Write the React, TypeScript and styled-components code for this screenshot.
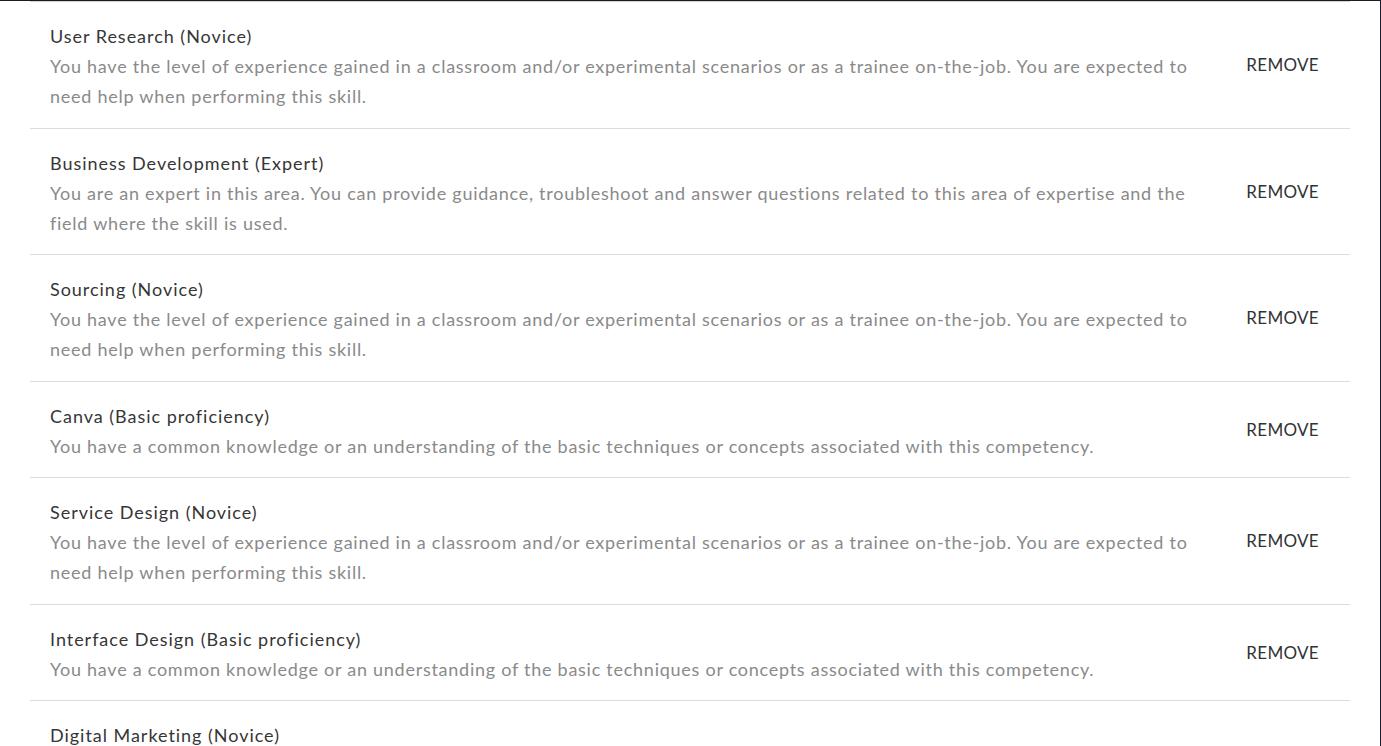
import styled, { createGlobalStyle } from 'styled-components';

const GlobalStyle = createGlobalStyle`
  * {
    box-sizing: border-box;
  }

  html, body {
    margin: 0;
    padding: 0;
    height: 100%;
    overflow: hidden;
    background: #fff;
  }

  body {
    font-family: Lato, "Open Sans", Arial, sans-serif;
  }
`

const Frame = styled.main`
  width: 100%;
  height: 100vh;
  overflow: hidden;
  border-top: 1px solid #1c1c1c;
  border-right: 1px solid #161d33;
`

const SkillList = styled.ul`
  list-style: none;
  margin: 0 30px;
  padding: 0;
  border-top: 1px solid #d4d4d4;
`

const SkillRow = styled.li`
  display: flex;
  align-items: center;
  gap: 40px;
  padding: 19px 0 16.5px 20px;
  border-bottom: 1px solid #dcdcdc;
`

const SkillText = styled.div`
  flex: 1;
  min-width: 0;
  line-height: 30px;
  font-size: 18px;
`

const SkillTitle = styled.div`
  color: #363636;
  letter-spacing: 0.97px;
`

const SkillDescription = styled.div`
  color: #8a8a8a;
  letter-spacing: 0.74px;
`

const RemoveButton = styled.button`
  flex-shrink: 0;
  padding: 0 31px 2px 0;
  border: none;
  background: none;
  font-family: Lato, "Open Sans", Arial, sans-serif;
  font-size: 17px;
  line-height: 30px;
  letter-spacing: 0.3px;
  color: #333;
  cursor: pointer;
`

const NOVICE = 'You have the level of experience gained in a classroom and/or experimental scenarios or as a trainee on-the-job. You are expected to need help when performing this skill.'
const BASIC = 'You have a common knowledge or an understanding of the basic techniques or concepts associated with this competency.'
const EXPERT = 'You are an expert in this area. You can provide guidance, troubleshoot and answer questions related to this area of expertise and the field where the skill is used.'

const skills = [
  { name: 'User Research', level: 'Novice', text: NOVICE },
  { name: 'Business Development', level: 'Expert', text: EXPERT },
  { name: 'Sourcing', level: 'Novice', text: NOVICE },
  { name: 'Canva', level: 'Basic proficiency', text: BASIC },
  { name: 'Service Design', level: 'Novice', text: NOVICE },
  { name: 'Interface Design', level: 'Basic proficiency', text: BASIC },
  { name: 'Digital Marketing', level: 'Novice', text: NOVICE },
]

const App = () => {
  return (
    <>
      <GlobalStyle />
      <Frame>
        <SkillList>
          {skills.map((skill) => (
            <SkillRow key={skill.name}>
              <SkillText>
                <SkillTitle>{skill.name} ({skill.level})</SkillTitle>
                <SkillDescription>{skill.text}</SkillDescription>
              </SkillText>
              <RemoveButton>REMOVE</RemoveButton>
            </SkillRow>
          ))}
        </SkillList>
      </Frame>
    </>
  )
}

export default App
